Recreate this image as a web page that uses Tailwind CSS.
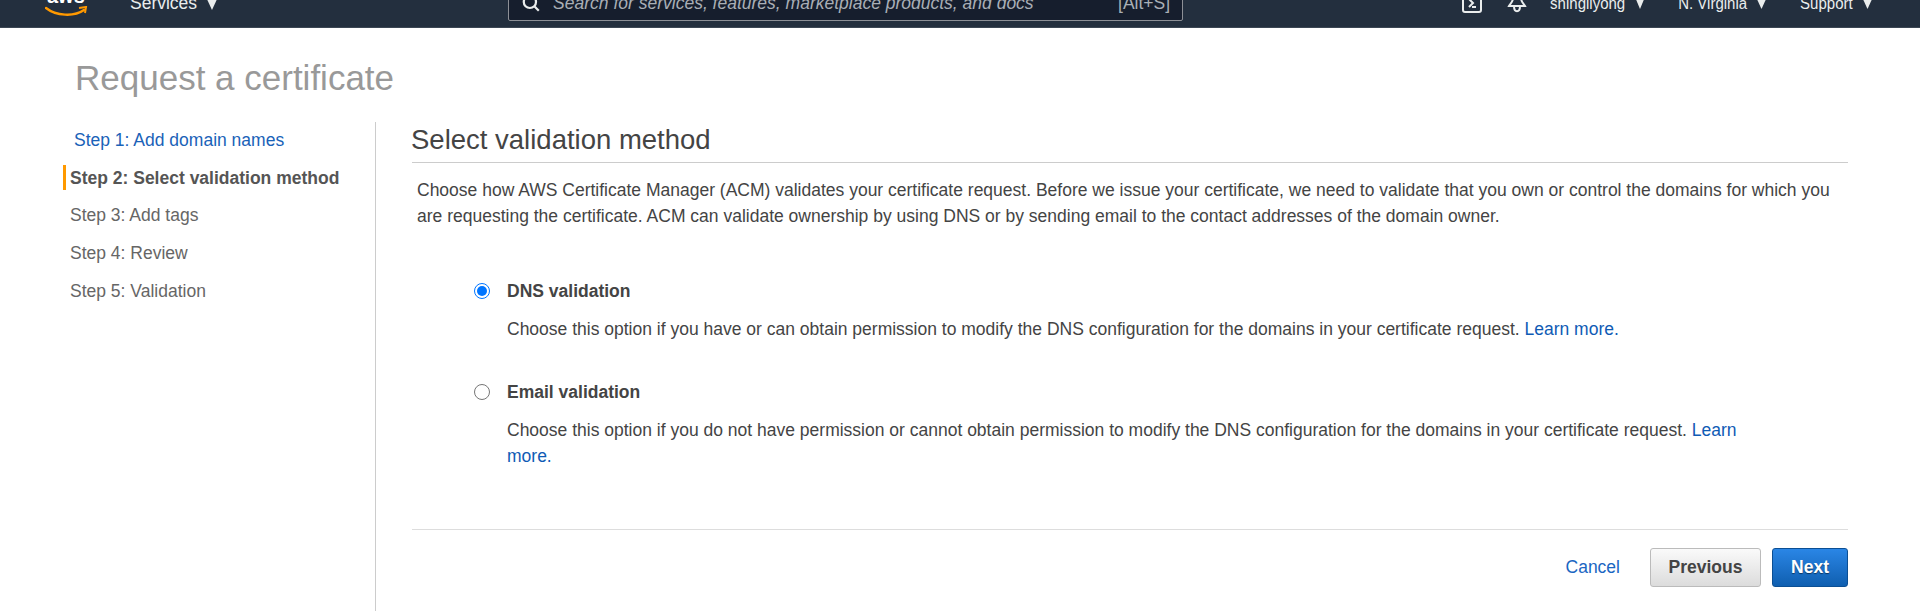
<!DOCTYPE html>
<html lang="en">
<head>
  <meta charset="UTF-8"/>
  <title>Request a certificate</title>
  <script src="https://cdn.jsdelivr.net/npm/@tailwindcss/browser@4"></script>
</head>
<body class="bg-white h-[611px] overflow-hidden font-['Liberation_Sans',Arial,sans-serif] text-[17.5px] text-[#444]">

  <!-- top bar, cut off by the top of the window -->
  <header class="h-[28px] overflow-hidden bg-[#232f3e] border-b border-b-[#3c4754] text-[#eaeded] text-[17.5px]">
    <div class="h-[54px] -mt-[24px] flex items-center">
      <div class="ml-[45px] w-[43px] h-[54px] relative shrink-0">
        <span class="absolute left-[2px] top-[10px] text-white font-bold text-[20px] leading-none">aws</span>
        <svg class="absolute left-0 top-[30px]" width="43" height="11" viewBox="0 0 43 11" fill="none">
          <path d="M1 2c10 8 28 9 38 2" stroke="#f90" stroke-width="2.4" stroke-linecap="round"/>
          <path d="M34 2l7-1-1 6" stroke="#f90" stroke-width="2"/>
        </svg>
      </div>
      <span class="ml-[42px]">Services</span>
      <svg class="ml-[9px]" width="12" height="13" viewBox="0 0 12 13"><path d="M0 0h12L6 13z" fill="#eaeded"/></svg>
      <div class="ml-[290px] w-[675px] h-[36px] shrink-0 flex items-center bg-[#161e2d] border border-[#8d9096] rounded-[2px] text-[#a9afb6]">
        <svg class="ml-[12px]" width="20" height="20" viewBox="0 0 18 18" fill="none" stroke="#eaeded" stroke-width="2">
          <circle cx="8" cy="8" r="5.5"/><path d="M12 12l4 4"/>
        </svg>
        <span class="ml-[12px] italic">Search for services, features, marketplace products, and docs</span>
        <span class="ml-auto mr-[12px]">[Alt+S]</span>
      </div>
      <svg class="ml-[279px]" width="20" height="20" viewBox="0 0 20 20" fill="none" stroke="#eaeded" stroke-width="2">
        <rect x="1" y="1" width="18" height="18" rx="2"/><path d="M7 6l4 4-4 4M10 14h4"/>
      </svg>
      <svg class="ml-[25px]" width="20" height="20" viewBox="0 0 20 20" fill="none" stroke="#eaeded" stroke-width="2">
        <path d="M10 0c-3 0-4 2-4 5 0 4-3 6-4 8h16c-1-2-4-4-4-8 0-3-1-5-4-5zM7 13c0 7 6 7 6 0"/>
      </svg>
      <div class="ml-[23px] flex items-center text-[15px]">
        <span class="scale-y-115">shingliyong</span>
        <svg class="ml-[10px]" width="10" height="12" viewBox="0 0 10 12"><path d="M0 0h10L5 12z" fill="#eaeded"/></svg>
        <span class="ml-[33px] scale-y-115">N. Virginia</span>
        <svg class="ml-[9px]" width="11" height="12" viewBox="0 0 11 12"><path d="M0 0h11L5.5 12z" fill="#eaeded"/></svg>
        <span class="ml-[33px] scale-y-115">Support</span>
        <svg class="ml-[9px]" width="11" height="12" viewBox="0 0 11 12"><path d="M0 0h11L5.5 12z" fill="#eaeded"/></svg>
      </div>
    </div>
  </header>

  <h1 class="ml-[75px] mt-[30px] h-[64px] text-[35px] leading-[40px] text-[#999]">Request a certificate</h1>

  <div class="flex h-[489px]">
    <!-- steps -->
    <nav class="ml-[63px] w-[312px] shrink-0">
      <ul class="-mt-[1px] text-[17.5px] leading-[22px] text-[#666]">
        <li class="h-[37.75px] flex items-center pl-[11px] text-[#1a62b8]">Step 1: Add domain names</li>
        <li class="h-[37.75px] flex items-center">
          <span class="w-[3px] h-[25px] bg-[#f90] mr-[4px]"></span>
          <b class="font-bold text-[#555]">Step 2: Select validation method</b>
        </li>
        <li class="h-[37.75px] flex items-center pl-[7px]">Step 3: Add tags</li>
        <li class="h-[37.75px] flex items-center pl-[7px]">Step 4: Review</li>
        <li class="h-[37.75px] flex items-center pl-[7px]">Step 5: Validation</li>
      </ul>
    </nav>

    <main class="flex-1 border-l border-l-[#ccc] pl-[36px] pr-[72px]">
      <h2 class="text-[27.5px] leading-[34px] h-[41px] pt-[1px] indent-[-1px] border-b border-b-[#ccc] text-[#444]">Select validation method</h2>
      <p class="mt-[14px] ml-[5px] leading-[26px]">Choose how AWS Certificate Manager (ACM) validates your certificate request. Before we issue your certificate, we need to validate that you own or control the domains for which you are requesting the certificate. ACM can validate ownership by using DNS or by sending email to the contact addresses of the domain owner.</p>

      <div class="mt-[49px] ml-[62px] flex">
        <span class="mt-[5px] w-[16px] h-[16px] rounded-full border border-[#0075ff] flex items-center justify-center shrink-0">
          <span class="w-[10px] h-[10px] rounded-full bg-[#0075ff]"></span>
        </span>
        <div class="ml-[17px] w-[1240px]">
          <div class="font-bold leading-[26px]">DNS validation</div>
          <p class="mt-[12px] leading-[26px]">Choose this option if you have or can obtain permission to modify the DNS configuration for the domains in your certificate request. <a class="text-[#0f5bb5]" href="#">Learn more.</a></p>
        </div>
      </div>

      <div class="mt-[37px] ml-[62px] flex">
        <span class="mt-[5px] w-[16px] h-[16px] rounded-full border border-[#767676] shrink-0"></span>
        <div class="ml-[17px] w-[1240px]">
          <div class="font-bold leading-[26px]">Email validation</div>
          <p class="mt-[12px] leading-[26px]">Choose this option if you do not have permission or cannot obtain permission to modify the DNS configuration for the domains in your certificate request. <a class="text-[#0f5bb5]" href="#">Learn more.</a></p>
        </div>
      </div>

      <div class="mt-[60px] pt-[18px] border-t border-t-[#ddd] flex items-center justify-end">
        <a class="text-[#1a66c2] mr-[30px]" href="#">Cancel</a>
        <button class="w-[111px] h-[39px] rounded-[3px] border border-[#bbb] bg-linear-to-b from-[#fafafa] to-[#dcdcdc] font-bold text-[#444]">Previous</button>
        <button class="ml-[11px] w-[76px] h-[39px] rounded-[3px] border border-[#0b4f94] bg-linear-to-b from-[#2a86e6] to-[#0f5fb0] font-bold text-white [text-shadow:0_1px_1px_rgba(0,0,0,.5)]">Next</button>
      </div>
    </main>
  </div>
</body>
</html>
